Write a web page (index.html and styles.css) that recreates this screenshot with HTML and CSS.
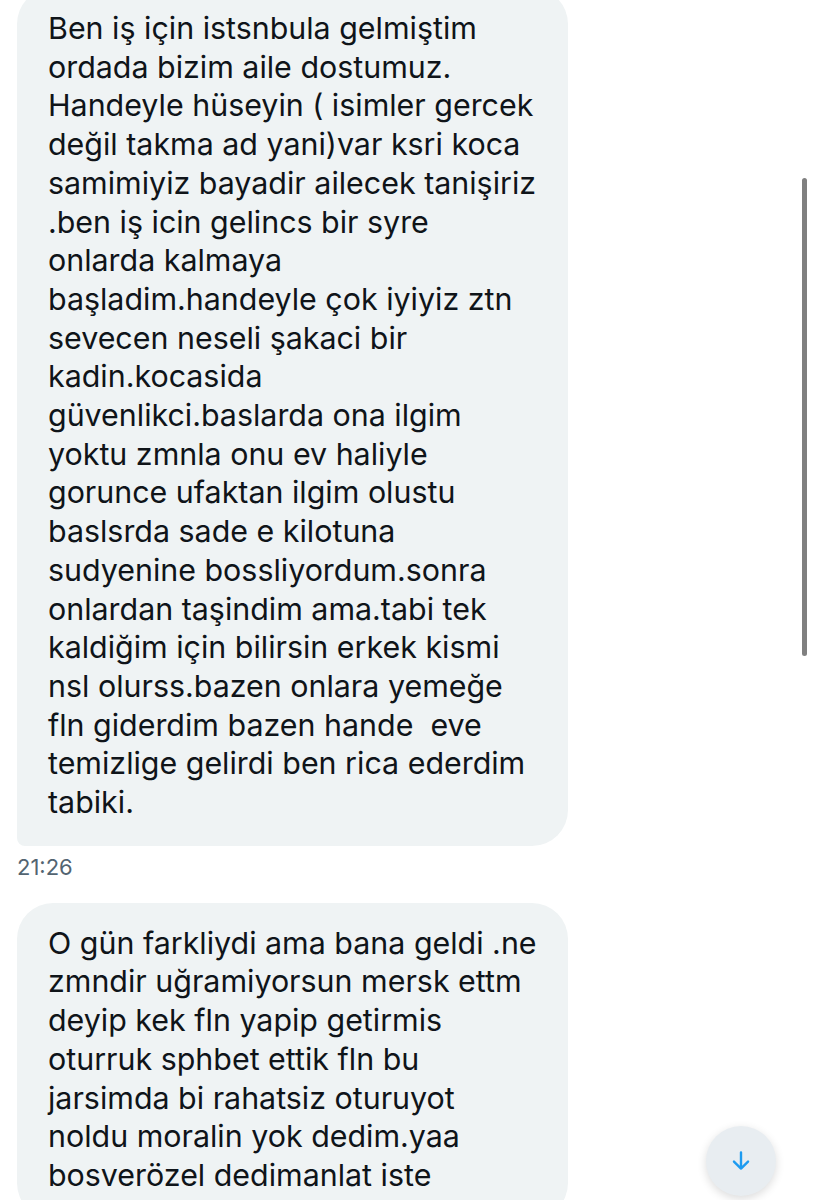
FILE: index.html
```html
<!DOCTYPE html>
<html lang="tr">
  <head>
    <meta charset="UTF-8" />
    <meta name="viewport" content="width=device-width, initial-scale=1.0" />
    <title>Mesajlar</title>
    <link rel="stylesheet" href="styles.css">
  </head>
  <body>
    <div id="conversation">
      <!-- Incoming message -->
      <div class="message">
        <div class="bubble bubble-tail">
          Ben iş için istsnbula gelmiştim<br>
          ordada bizim aile dostumuz.<br>
          Handeyle hüseyin ( isimler gercek<br>
          değil takma ad yani)var ksri koca<br>
          samimiyiz bayadir ailecek tanişiriz<br>
          .ben iş icin gelincs bir syre<br>
          onlarda kalmaya<br>
          başladim.handeyle çok iyiyiz ztn<br>
          sevecen neseli şakaci bir<br>
          kadin.kocasida<br>
          güvenlikci.baslarda ona ilgim<br>
          yoktu zmnla onu ev haliyle<br>
          gorunce ufaktan ilgim olustu<br>
          baslsrda sade e kilotuna<br>
          sudyenine bossliyordum.sonra<br>
          onlardan taşindim ama.tabi tek<br>
          kaldiğim için bilirsin erkek kismi<br>
          nsl olurss.bazen onlara yemeğe<br>
          fln giderdim bazen hande&nbsp; eve<br>
          temizlige gelirdi ben rica ederdim<br>
          tabiki.
        </div>
        <div class="timestamp">21:26</div>
      </div>

      <div class="message">
        <div class="bubble">
          O gün farkliydi ama bana geldi .ne<br>
          zmndir uğramiyorsun mersk ettm<br>
          deyip kek fln yapip getirmis<br>
          oturruk sphbet ettik fln bu<br>
          jarsimda bi rahatsiz oturuyot<br>
          noldu moralin yok dedim.yaa<br>
          bosverözel dedimanlat iste
        </div>
      </div>
    </div>

    <!-- Scroll indicator -->
    <div id="scrollbar"></div>

    <!-- Jump to latest -->
    <button id="scroll-down" aria-label="En alta git">
      <svg viewBox="0 0 24 24" width="26" height="26">
        <path d="M12 4v15M5.5 12.5L12 19l6.5-6.5" fill="none" stroke="#1d9bf0" stroke-width="2.2" stroke-linecap="round" stroke-linejoin="round" />
      </svg>
    </button>
  </body>
</html>
```

FILE: styles.css
```css
/* Chat screen */
body {
  margin: 0;
  width: 813px;
  height: 1200px;
  overflow: hidden;
  background-color: #ffffff;
  font-family: Inter, "Noto Sans", sans-serif;
  color: #0f1419;
}

#conversation {
  display: flex;
  flex-direction: column;
  gap: 21px;
  padding: 0 17px;
  margin-top: -12px;
}

.message {
  display: flex;
  flex-direction: column;
  gap: 6px;
}

/* Message bubble */
.bubble {
  width: 551px;
  box-sizing: border-box;
  padding: 21px 31px 24px;
  background-color: #eff3f4;
  border-radius: 36px;
  font-size: 30.4px;
  line-height: 38.7px;
  white-space: nowrap;
}

.bubble-tail {
  border-bottom-left-radius: 8px;
}

.timestamp {
  font-size: 22px;
  line-height: 30px;
  color: #536471;
}

/* Scrollbar thumb */
#scrollbar {
  position: absolute;
  top: 178px;
  left: 802px;
  width: 5px;
  height: 478px;
  border-radius: 3px;
  background-color: #808080;
}

/* Floating scroll-down button */
#scroll-down {
  position: absolute;
  top: 1126px;
  left: 706px;
  width: 70px;
  height: 70px;
  border: none;
  border-radius: 50%;
  background-color: #e8edf1;
  box-shadow: 0 3px 10px rgba(0, 0, 0, 0.14);
  display: flex;
  align-items: center;
  justify-content: center;
  padding: 0;
}
```
